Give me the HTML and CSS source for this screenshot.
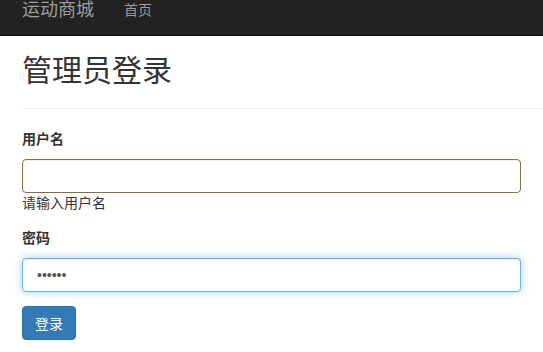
FILE: index.html
```html
<!DOCTYPE html>
<html>

<head lang="zh">
    <meta charset="UTF-8">
    <title>管理员登录</title>
    <link rel="stylesheet" href="styles.css">
</head>

<body>
    <nav class="navbar">
        <a class="brand" href="#">运动商城</a>
        <a class="nav-link" href="#">首页</a>
    </nav>

    <div class="container">
        <div class="page-header">
            <h2>管理员登录</h2>
        </div>

        <form class="login">
            <div class="form-group">
                <label for="username">用户名</label>
                <input id="username" class="form-control warn" type="text">
                <span class="help">请输入用户名</span>
            </div>
            <div class="form-group">
                <label for="password">密码</label>
                <input id="password" class="form-control focus" type="password" value="123456">
            </div>
            <button class="btn" type="button">登录</button>
        </form>
    </div>
</body>

</html>
```

FILE: styles.css
```css
body {
    margin: 0;
    font-family: "Liberation Sans", "Noto Sans CJK SC", sans-serif;
    font-size: 14px;
    color: #333;
    background: #fff;
}

a {
    text-decoration: none;
}

.navbar {
    display: flex;
    align-items: flex-start;
    height: 35px;
    padding: 0 22px;
    background: #222;
    border-bottom: 1px solid #080808;
}

.brand {
    font-size: 18px;
    line-height: 20px;
    color: #9d9d9d;
}

.nav-link {
    margin-left: 30px;
    font-size: 14px;
    line-height: 20px;
    color: #9d9d9d;
}

.container {
    padding: 0 22px;
}

.page-header {
    margin: 18px -22px 20px 0;
    padding-bottom: 20px;
    border-bottom: 1px solid #eee;
}

.page-header h2 {
    margin: 0;
    font-size: 30px;
    font-weight: 400;
    line-height: 34px;
}

.form-group label {
    display: block;
    margin-bottom: 10px;
    font-weight: bold;
    line-height: 20px;
}

.form-group + .form-group {
    margin-top: 15px;
}

.form-control {
    display: block;
    box-sizing: border-box;
    width: 100%;
    height: 34px;
    padding: 6px 14px;
    font-family: inherit;
    font-size: 14px;
    color: #555;
    border: 1px solid #ccc;
    border-radius: 4px;
    box-shadow: inset 0 1px 1px rgba(0, 0, 0, .075);
    outline: none;
}

.form-control.warn {
    border-color: #8a6d3b;
}

.form-control.focus {
    border-color: #66afe9;
    box-shadow: inset 0 1px 1px rgba(0, 0, 0, .075), 0 0 8px rgba(102, 175, 233, .6);
}

.help {
    display: block;
    line-height: 20px;
    color: #333;
}

.btn {
    margin-top: 14px;
    height: 34px;
    padding: 0 12px;
    font-family: inherit;
    font-size: 14px;
    color: #fff;
    background: #337ab7;
    border: 1px solid #2e6da4;
    border-radius: 4px;
}
```
